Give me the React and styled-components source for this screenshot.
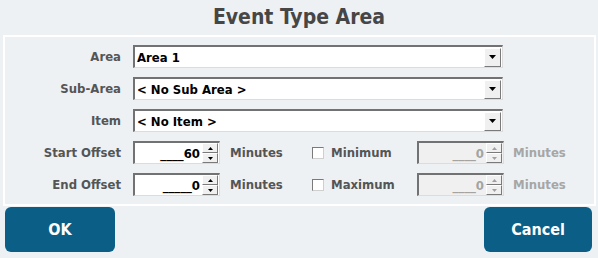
import React from "react";
import styled, { createGlobalStyle } from "styled-components";

const Global = createGlobalStyle`
  html, body { margin: 0; padding: 0; background: #edf1f4; }
  body { font-family: "DejaVu Sans Condensed", "DejaVu Sans", sans-serif; }
`;

const Dialog = styled.div`
  width: 598px;
  height: 258px;
  box-sizing: border-box;
  background: #edf1f4;
  display: flex;
  flex-direction: column;
`;

const Title = styled.h1`
  margin: 0;
  height: 35px;
  line-height: 35px;
  text-align: center;
  font-size: 21px;
  font-weight: bold;
  color: #464646;
`;

const Panel = styled.div`
  margin: 0 2px 0 3px;
  border: 2px solid #ffffff;
  padding: 8px 0 8px 0;
  display: flex;
  flex-direction: column;
  gap: 9px;
`;

const Row = styled.div`
  display: flex;
  align-items: center;
  height: 23px;
`;

const Label = styled.label`
  width: 116px;
  margin-right: 12px;
  text-align: right;
  font-size: 13px;
  font-weight: bold;
  color: #555555;
  flex-shrink: 0;
  white-space: nowrap;
`;

const Field = styled.div`
  position: relative;
  box-sizing: border-box;
  height: 23px;
  width: ${(p) => p.$w}px;
  border-style: solid;
  border-width: 2px 1px 1px 2px;
  border-color: #727272 #dcdcdc #dcdcdc #727272;
  background: ${(p) => (p.$disabled ? "#f0f0f0" : "#ffffff")};
  display: flex;
  align-items: center;
  font-size: 13px;
  font-weight: bold;
  color: ${(p) => (p.$disabled ? "#a3a3a3" : "#000000")};
  white-space: nowrap;
`;

const SelectText = styled.span`
  flex: 1;
  padding-left: 2px;
`;

const DropButton = styled.div`
  box-sizing: border-box;
  width: 17px;
  height: 19px;
  margin-right: 1px;
  background: #f0f0f0;
  border-style: solid;
  border-width: 1px;
  border-color: #ffffff #7a7a7a #7a7a7a #ffffff;
  display: flex;
  align-items: center;
  justify-content: center;
`;

const SpinText = styled.span`
  flex: 1;
  text-align: right;
  padding-right: 2px;
`;

const SpinButtons = styled.div`
  display: flex;
  flex-direction: column;
  margin-right: 1px;
`;

const SpinButton = styled.div`
  box-sizing: border-box;
  width: 16px;
  height: 10px;
  background: #f0f0f0;
  border-style: solid;
  border-width: 1px;
  border-color: #ffffff #7a7a7a #7a7a7a #ffffff;
  display: flex;
  align-items: center;
  justify-content: center;
`;

const Unit = styled.span`
  margin-left: ${(p) => p.$ml}px;
  width: ${(p) => p.$w}px;
  font-size: 13px;
  font-weight: bold;
  color: ${(p) => (p.$disabled ? "#a6a6a6" : "#555555")};
  flex-shrink: 0;
`;

const Check = styled.span`
  box-sizing: border-box;
  width: 12px;
  height: 12px;
  background: #ffffff;
  border-style: solid;
  border-width: 1px;
  border-color: #7a7a7a #cfcfcf #cfcfcf #7a7a7a;
  flex-shrink: 0;
`;

const CheckLabel = styled.span`
  margin-left: 7px;
  width: 86px;
  font-size: 13px;
  font-weight: bold;
  color: #555555;
  flex-shrink: 0;
`;

const Footer = styled.div`
  display: flex;
  justify-content: space-between;
  padding: 1px 6px 0 5px;
`;

const Button = styled.button`
  width: ${(p) => p.$w}px;
  height: 45px;
  border: none;
  border-radius: 6px;
  background: #0b5e85;
  color: #ffffff;
  font-family: inherit;
  font-size: 16px;
  font-weight: bold;
  padding: 0;
  cursor: pointer;
`;

const Tri = ({ up, color = "#000" }) => (
  <svg width="7" height="4" viewBox="0 0 7 4">
    {up ? (
      <polygon points="3.5,0 7,4 0,4" fill={color} />
    ) : (
      <polygon points="0,0 7,0 3.5,4" fill={color} />
    )}
  </svg>
);

const SmallTri = ({ up, color = "#000" }) => (
  <svg width="5" height="3" viewBox="0 0 5 3">
    {up ? (
      <polygon points="2.5,0 5,3 0,3" fill={color} />
    ) : (
      <polygon points="0,0 5,0 2.5,3" fill={color} />
    )}
  </svg>
);

const Select = ({ value }) => (
  <Field $w={370}>
    <SelectText>{value}</SelectText>
    <DropButton>
      <Tri />
    </DropButton>
  </Field>
);

const Spin = ({ value, disabled }) => {
  const c = disabled ? "#a0a0a0" : "#000";
  return (
    <Field $w={87} $disabled={disabled}>
      <SpinText>{value}</SpinText>
      <SpinButtons>
        <SpinButton>
          <SmallTri up color={c} />
        </SpinButton>
        <SpinButton>
          <SmallTri color={c} />
        </SpinButton>
      </SpinButtons>
    </Field>
  );
};

const OffsetRow = ({ label, value, check }) => (
  <Row>
    <Label>{label}</Label>
    <Spin value={value} />
    <Unit $ml={10} $w={82}>Minutes</Unit>
    <Check />
    <CheckLabel>{check}</CheckLabel>
    <Spin value="____0" disabled />
    <Unit $ml={9} $w={60} $disabled>Minutes</Unit>
  </Row>
);

export default function App() {
  return (
    <>
      <Global />
      <Dialog>
        <Title>Event Type Area</Title>
        <Panel>
          <Row>
            <Label>Area</Label>
            <Select value="Area 1" />
          </Row>
          <Row>
            <Label>Sub-Area</Label>
            <Select value="< No Sub Area >" />
          </Row>
          <Row>
            <Label>Item</Label>
            <Select value="< No Item >" />
          </Row>
          <OffsetRow label="Start Offset" value="____60" check="Minimum" />
          <OffsetRow label="End Offset" value="_____0" check="Maximum" />
        </Panel>
        <Footer>
          <Button $w={110}>OK</Button>
          <Button $w={108}>Cancel</Button>
        </Footer>
      </Dialog>
    </>
  );
}
